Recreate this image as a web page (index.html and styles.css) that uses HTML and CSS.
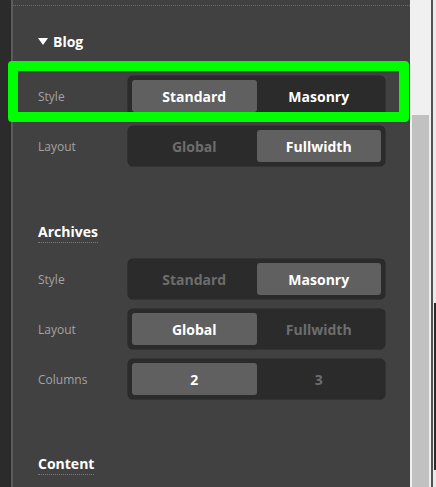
FILE: index.html
```html
<!DOCTYPE html>
<html lang="en">
<head>
<meta charset="utf-8">
<title>Blog settings</title>
<link rel="stylesheet" href="styles.css">
</head>
<body>
<div class="app">
  <div class="rail"></div>
  <div class="panel">
    <div class="topline"></div>

    <section class="group group-blog">
      <h3 class="group-title toggle"><span class="caret"></span>Blog</h3>
      <div class="rows">
        <div class="row">
          <span class="label">Style</span>
          <div class="seg">
            <span class="opt active">Standard</span>
            <span class="opt hover">Masonry</span>
          </div>
        </div>
        <div class="row">
          <span class="label">Layout</span>
          <div class="seg">
            <span class="opt">Global</span>
            <span class="opt active">Fullwidth</span>
          </div>
        </div>
      </div>
    </section>

    <section class="group">
      <h3 class="group-title"><span class="dotted">Archives</span></h3>
      <div class="rows">
        <div class="row">
          <span class="label">Style</span>
          <div class="seg">
            <span class="opt">Standard</span>
            <span class="opt active">Masonry</span>
          </div>
        </div>
        <div class="row">
          <span class="label">Layout</span>
          <div class="seg">
            <span class="opt active">Global</span>
            <span class="opt">Fullwidth</span>
          </div>
        </div>
        <div class="row">
          <span class="label">Columns</span>
          <div class="seg">
            <span class="opt active">2</span>
            <span class="opt">3</span>
          </div>
        </div>
      </div>
    </section>

    <section class="group group-last">
      <h3 class="group-title"><span class="dotted">Content</span></h3>
    </section>
  </div>
  <div class="scrollbar">
    <div class="scroll-space"></div>
    <div class="thumb"></div>
  </div>
  <div class="edge">
    <div class="edge-top"></div>
    <div class="edge-dark"></div>
  </div>
  <div class="highlight"></div>
</div>
</body>
</html>
```

FILE: styles.css
```css
html, body {
  margin: 0;
  padding: 0;
}

body {
  width: 436px;
  height: 487px;
  overflow: hidden;
  background: #414141;
  font-family: "Open Sans", "Noto Sans", sans-serif;
}

.app {
  position: relative;
  display: flex;
  width: 436px;
  height: 487px;
}

.rail {
  width: 11px;
  flex: none;
  background: #2b2b2b;
  border-right: 2px solid #5b5b5b;
}

.panel {
  width: 347px;
  flex: none;
  padding: 0 25px;
  background: #414141;
}

.topline {
  height: 5px;
  margin: 0 -25px;
  border-bottom: 1px dotted #6c6c6c;
}

.group {
  margin-top: 56px;
}

.group-blog {
  margin-top: 26px;
}

.group-last {
  margin-top: 55px;
}

.group-title {
  margin: 0 0 17px;
  height: 20px;
  font-size: 14px;
  line-height: 20px;
  font-weight: 700;
  color: #ffffff;
}

.toggle {
  display: flex;
  align-items: center;
  margin-bottom: 24px;
}

.caret {
  width: 0;
  height: 0;
  margin: -2px 5px 0 0;
  border-left: 5px solid transparent;
  border-right: 5px solid transparent;
  border-top: 7px solid #ffffff;
}

.dotted {
  display: inline-block;
  height: 20px;
  border-bottom: 1px dotted #7a7a7a;
}

.rows {
  display: flex;
  flex-direction: column;
  gap: 10px;
}

.row {
  display: flex;
  align-items: center;
  height: 40px;
}

.label {
  width: 90px;
  flex: none;
  font-size: 12px;
  color: #a3a3a3;
}

.seg {
  display: flex;
  box-sizing: border-box;
  width: 257px;
  height: 40px;
  padding: 4px;
  background: #2b2b2b;
  border-radius: 5px;
  box-shadow: 0 0 0 0.5px #262626;
}

.opt {
  flex: 1 1 0;
  display: flex;
  align-items: center;
  justify-content: center;
  border-radius: 3px;
  font-size: 14px;
  font-weight: 700;
  color: #6d6d6d;
}

.opt.active {
  background: #606060;
  color: #ffffff;
}

.opt.hover {
  color: #ffffff;
}

.scrollbar {
  width: 21px;
  flex: none;
  display: flex;
  flex-direction: column;
  background: #f0f0f0;
}

.scroll-space {
  height: 115px;
  flex: none;
}

.thumb {
  flex: 1;
  margin: 0 2px;
  background: #c1c1c1;
}

.edge {
  width: 3px;
  flex: none;
  display: flex;
  flex-direction: column;
  border-left: 2px solid #525252;
  background: #e9e9e9;
}

.edge-top {
  height: 303px;
  flex: none;
}

.edge-dark {
  height: 167px;
  margin-left: 1px;
  background: #2a2a2a;
}

.highlight {
  position: absolute;
  left: 8px;
  top: 61px;
  width: 381px;
  height: 41px;
  border: 10px solid #00ff00;
  border-radius: 4px;
  pointer-events: none;
}
```
